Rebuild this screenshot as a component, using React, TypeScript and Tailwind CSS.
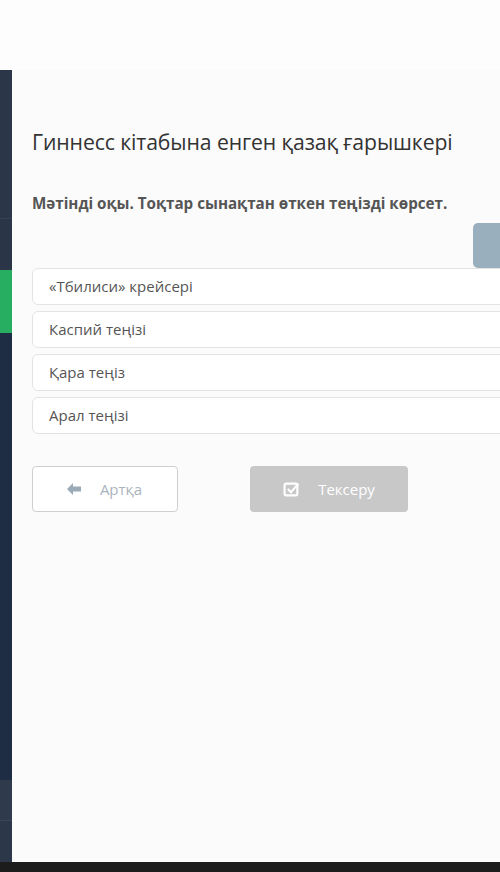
import React from "react";

const options = [
  "«Тбилиси» крейсері",
  "Каспий теңізі",
  "Қара теңіз",
  "Арал теңізі",
];

const App = () => {
  return (
    <div
      className="w-[500px] h-[872px] overflow-hidden flex flex-col bg-[#fbfbfb]"
      style={{ fontFamily: '"Open Sans", "Noto Sans", sans-serif' }}
    >
      <div className="h-[70px] shrink-0 bg-[#fdfdfd]" />
      <div className="flex flex-1 min-h-0">
        {/* left rail */}
        <div className="w-[12px] shrink-0 flex flex-col">
          <div className="h-[148px] bg-[#2b3648]" />
          <div className="h-[52px] bg-[#2a3547] border-t border-[#354155]" />
          <div className="h-[63px] bg-[#27ae60]" />
          <div className="flex-1 bg-[#1f2d44]" />
          <div className="h-[40px] bg-[#2f3b4c]" />
          <div className="h-[42px] bg-[#2c3849] border-t border-[#3a4555]" />
        </div>

        {/* main */}
        <main className="flex-1 pl-[20px] pt-[58px]">
          <h1 className="text-[21.2px] leading-[28px] text-[#333333] tracking-[-0.1px]">
            Гиннесс кітабына енген қазақ ғарышкері
          </h1>
          <p className="mt-[37px] text-[15.2px] leading-[20px] font-bold text-[#555555]">
            Мәтінді оқы. Тоқтар сынақтан өткен теңізді көрсет.
          </p>

          <div className="flex justify-end mt-[10px]">
            <div className="w-[27px] h-[45px] bg-[#9aafbe] rounded-l-[5px]" />
          </div>

          <div className="flex flex-col gap-[6px] -mr-[10px]">
            {options.map((o) => (
              <div
                key={o}
                className="h-[37px] flex items-center pl-[16px] bg-white border border-[#e3e3e3] rounded-[6px] text-[15px] text-[#555555]"
              >
                {o}
              </div>
            ))}
          </div>

          <div className="flex mt-[32px] gap-[72px]">
            <button className="w-[146px] h-[46px] flex items-center justify-center gap-[18px] bg-white border border-[#cfcfcf] rounded-[4px] text-[15px] text-[#a9b4bd] pr-[2px]">
              <svg width="16" height="14" viewBox="0 0 16 14" fill="#9aaab6">
                <path d="M7 1 L1 7 L7 13 L7 9.5 L15 9.5 L15 4.5 L7 4.5 Z" />
              </svg>
              Артқа
            </button>
            <button className="w-[158px] h-[46px] flex items-center justify-center gap-[18px] bg-[#c8c8c8] rounded-[4px] text-[15px] text-white">
              <svg width="17" height="17" viewBox="0 0 16 16" fill="none" stroke="white" strokeWidth="2">
                <rect x="1.5" y="2.5" width="12" height="11" rx="1.5" />
                <path d="M4.5 7.5 L7.5 10.5 L14.5 2.5" />
              </svg>
              Тексеру
            </button>
          </div>
        </main>
      </div>
      <div className="h-[10px] shrink-0 bg-[#1c1c1c]" />
    </div>
  );
};

export default App;
